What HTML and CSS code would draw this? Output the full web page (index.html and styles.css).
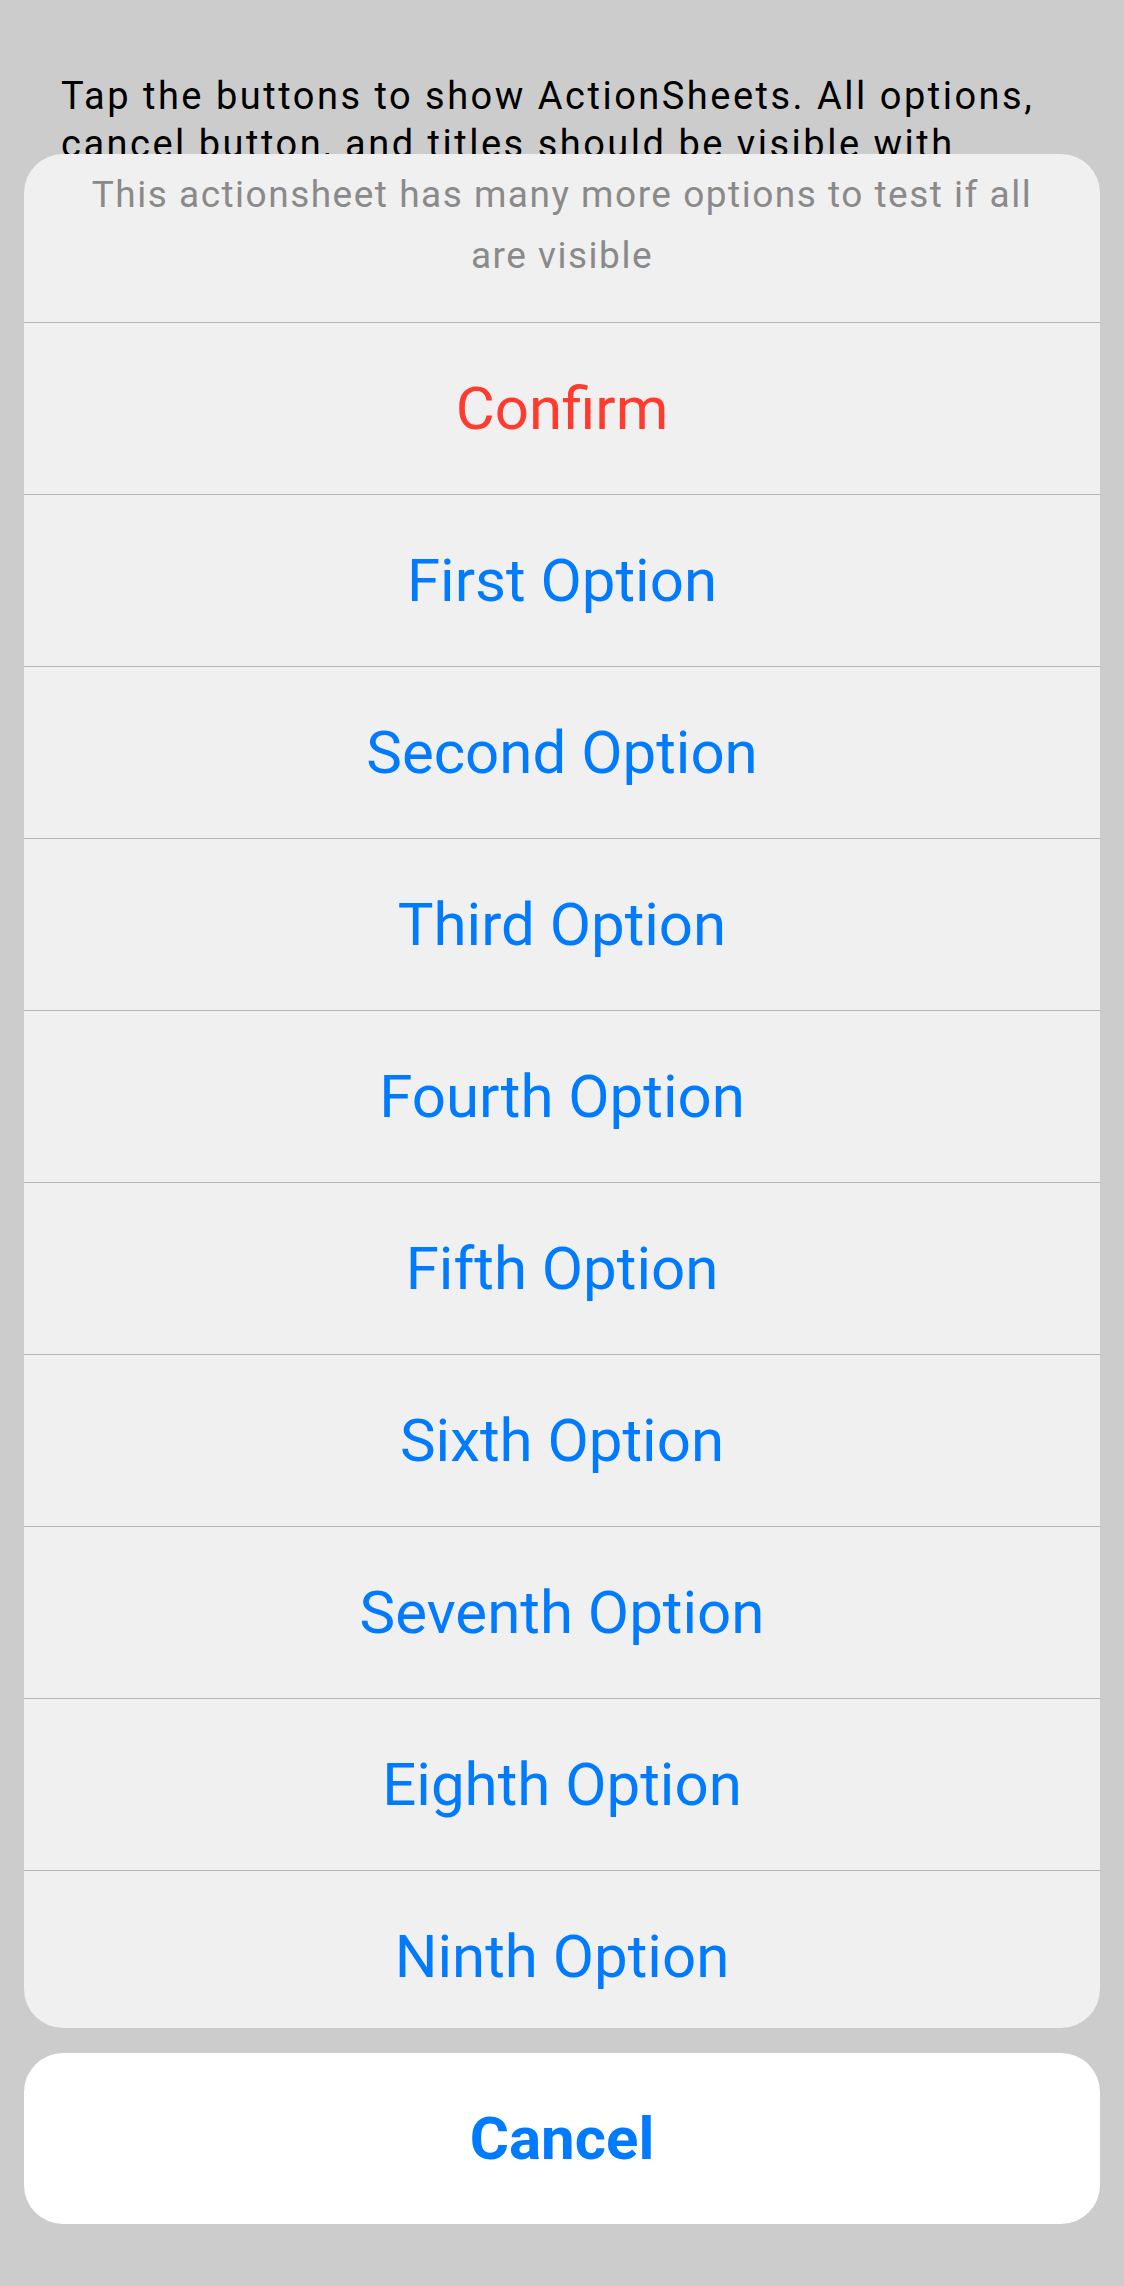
FILE: index.html
```html
<!DOCTYPE html>
<html>
<head>
<meta charset="utf-8">
<link rel="stylesheet" href="styles.css">
</head>
<body>
<main class="page">
  <p class="intro">Tap the buttons to show ActionSheets. All options, cancel button, and titles should be visible with scrolling if needed.</p>
</main>
<div class="sheet-wrap">
  <div class="sheet">
    <div class="sheet-title">This actionsheet has many more options to test if all are visible</div>
    <div class="row destructive">Confirm</div>
    <div class="row">First Option</div>
    <div class="row">Second Option</div>
    <div class="row">Third Option</div>
    <div class="row">Fourth Option</div>
    <div class="row">Fifth Option</div>
    <div class="row">Sixth Option</div>
    <div class="row">Seventh Option</div>
    <div class="row">Eighth Option</div>
    <div class="row">Ninth Option</div>
  </div>
  <div class="cancel">Cancel</div>
</div>
</body>
</html>
```
FILE: styles.css
```css
html, body {
  margin: 0;
  padding: 0;
}
body {
  width: 1124px;
  height: 2286px;
  background: #cccccc;
  font-family: Roboto, "Liberation Sans", sans-serif;
  position: relative;
  overflow: hidden;
}
.page {
  padding: 72px 50px 0 61px;
}
.intro {
  margin: 0;
  font-size: 38px;
  line-height: 48px;
  letter-spacing: 2.5px;
  color: #000;
}
.sheet-wrap {
  position: absolute;
  left: 24px;
  right: 24px;
  bottom: 62px;
  display: flex;
  flex-direction: column;
  gap: 25px;
}
.sheet {
  height: 1874px;
  background: #f0f0f0;
  border-radius: 39px;
  overflow: hidden;
  display: flex;
  flex-direction: column;
}
.sheet-title {
  flex: none;
  box-sizing: border-box;
  height: 168px;
  padding: 10px 36px 0;
  text-align: center;
  font-size: 37px;
  line-height: 61px;
  letter-spacing: 1.5px;
  color: #8a8a8a;
}
.row {
  flex: none;
  box-sizing: border-box;
  height: 172px;
  border-top: 1px solid #b5b5b5;
  display: flex;
  align-items: center;
  justify-content: center;
  font-size: 60px;
  color: #007aff;
}
.row.destructive {
  color: #ff3b30;
}
.cancel {
  height: 171px;
  background: #ffffff;
  border-radius: 39px;
  display: flex;
  align-items: center;
  justify-content: center;
  font-size: 60px;
  font-weight: 700;
  color: #007aff;
}
```
